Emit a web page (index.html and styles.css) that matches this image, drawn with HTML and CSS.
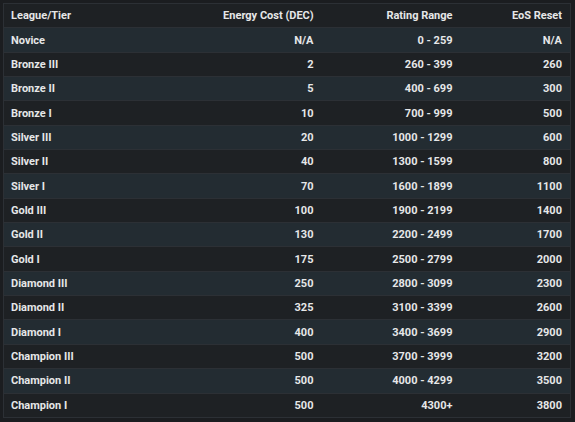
FILE: index.html
```html
<!DOCTYPE html>
<html>
<head>
<meta charset="utf-8">
<link rel="stylesheet" href="styles.css">
</head>
<body>
<table class="tiers">
  <thead>
    <tr><th class="c1">League/Tier</th><th class="c2">Energy Cost (DEC)</th><th class="c3">Rating Range</th><th class="c4">EoS Reset</th></tr>
  </thead>
  <tbody>
    <tr><td>Novice</td><td>N/A</td><td>0 - 259</td><td>N/A</td></tr>
    <tr><td>Bronze III</td><td>2</td><td>260 - 399</td><td>260</td></tr>
    <tr><td>Bronze II</td><td>5</td><td>400 - 699</td><td>300</td></tr>
    <tr><td>Bronze I</td><td>10</td><td>700 - 999</td><td>500</td></tr>
    <tr><td>Silver III</td><td>20</td><td>1000 - 1299</td><td>600</td></tr>
    <tr><td>Silver II</td><td>40</td><td>1300 - 1599</td><td>800</td></tr>
    <tr><td>Silver I</td><td>70</td><td>1600 - 1899</td><td>1100</td></tr>
    <tr><td>Gold III</td><td>100</td><td>1900 - 2199</td><td>1400</td></tr>
    <tr><td>Gold II</td><td>130</td><td>2200 - 2499</td><td>1700</td></tr>
    <tr><td>Gold I</td><td>175</td><td>2500 - 2799</td><td>2000</td></tr>
    <tr><td>Diamond III</td><td>250</td><td>2800 - 3099</td><td>2300</td></tr>
    <tr><td>Diamond II</td><td>325</td><td>3100 - 3399</td><td>2600</td></tr>
    <tr><td>Diamond I</td><td>400</td><td>3400 - 3699</td><td>2900</td></tr>
    <tr><td>Champion III</td><td>500</td><td>3700 - 3999</td><td>3200</td></tr>
    <tr><td>Champion II</td><td>500</td><td>4000 - 4299</td><td>3500</td></tr>
    <tr><td>Champion I</td><td>500</td><td>4300+</td><td>3800</td></tr>
  </tbody>
</table>
</body>
</html>
```
FILE: styles.css
```css
html, body {
  background: #1b1d20;
}
body {
  margin: 3px 4px 3px 3px;
  font-family: Roboto, "Liberation Sans", sans-serif;
  font-size: 11px;
  font-weight: 700;
  color: #e6e7e8;
}
.tiers {
  width: 100%;
  border-collapse: collapse;
  border: 1px solid #2c3035;
  table-layout: fixed;
}
.tiers th, .tiers td {
  height: 24.35px;
  padding: 0 8px 0 7px;
  box-sizing: border-box;
  border-bottom: 1px solid #2c3035;
  text-align: right;
  white-space: nowrap;
}
.tiers th:first-child, .tiers td:first-child {
  text-align: left;
}
.c1 { width: 165px; }
.c2 { width: 153px; }
.c3 { width: 139px; }
.c4 { width: 110px; }
.tiers thead tr, .tiers tbody tr:nth-child(even) {
  background: #1e2124;
}
.tiers tbody tr:nth-child(odd) {
  background: #232c32;
}
```
